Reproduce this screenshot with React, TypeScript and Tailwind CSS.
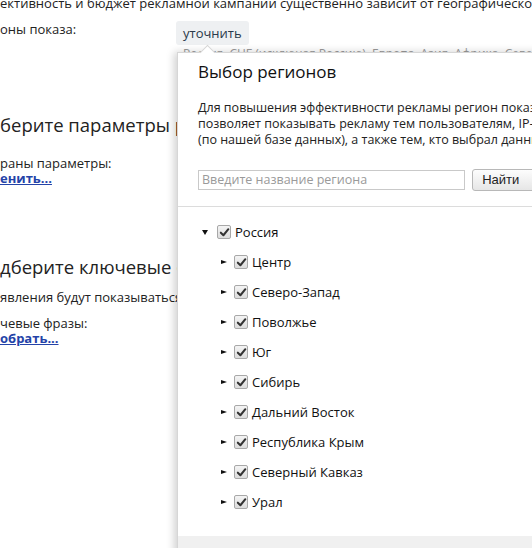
import React from "react";

const REGIONS = [
  "Центр",
  "Северо-Запад",
  "Поволжье",
  "Юг",
  "Сибирь",
  "Дальний Восток",
  "Республика Крым",
  "Северный Кавказ",
  "Урал",
];

function Check() {
  return (
    <span className="flex h-[14px] w-[14px] shrink-0 items-center justify-center rounded-[2px] border border-[#a8a8a8] bg-gradient-to-b from-[#f4f4f4] to-[#dcdcdc]">
      <svg viewBox="0 0 12 12" className="h-[11px] w-[11px]">
        <path d="M2 6.2 L4.8 9 L10.2 2.4" fill="none" stroke="#333" strokeWidth="2.2" strokeLinecap="round" strokeLinejoin="round" />
      </svg>
    </span>
  );
}

function Arrow({ open }: { open?: boolean }) {
  return open ? (
    <svg viewBox="0 0 6 5" className="h-[5px] w-[6px]">
      <path d="M0 0 H6 L3 5 Z" fill="#111" />
    </svg>
  ) : (
    <svg viewBox="0 0 6 4" className="h-[4px] w-[6px]">
      <path d="M0 0 L6 2 L0 4 Z" fill="#111" />
    </svg>
  );
}

export default function App() {
  return (
    <div className="relative h-[548px] w-[532px] overflow-hidden bg-white font-['Open_Sans',sans-serif] text-[#222]">
      {/* page behind the popup */}
      <div className="-mt-[6px]">
        <p className="whitespace-nowrap text-[13px] leading-[18px]">
          ективность и бюджет рекламной кампании существенно зависит от географического региона показа.
        </p>
        <div className="mt-[9px] flex items-start">
          <span className="w-[176px] text-[13px] leading-[16px]">оны показа:</span>
          <span className="rounded-[3px] bg-[#eef0f2] px-[7px] py-[3px] text-[13px] leading-[18px] text-[#2b3a4a]">
            уточнить
          </span>
        </div>
        <p className="mt-[1px] whitespace-nowrap pl-[183px] text-[12px] leading-[16px] text-[#999]">
          Россия, СНГ (исключая Россию), Европа, Азия, Африка, Северная Америка
        </p>

        <h2 className="mt-[50px] whitespace-nowrap text-[18.5px] leading-[26px]">берите параметры рекламы</h2>
        <p className="mt-[17px] text-[13px] leading-[16px]">раны параметры:</p>
        <a className="block text-[13px] font-bold leading-[15px] text-[#2443a8] underline">енить...</a>

        <h2 className="mt-[68px] whitespace-nowrap text-[18.5px] leading-[26px]">дберите ключевые фразы</h2>
        <p className="mt-[9px] whitespace-nowrap text-[13px] leading-[16px]">явления будут показываться по этим фразам</p>
        <p className="mt-[10px] text-[13px] leading-[16px]">чевые фразы:</p>
        <a className="block text-[13px] font-bold leading-[14px] text-[#2443a8] underline">обрать...</a>
      </div>

      {/* popup */}
      <div className="absolute bottom-[-10px] left-[177px] right-[-40px] top-[52px] flex flex-col border-l border-t border-[#d6d6d6] bg-white shadow-[-3px_0_8px_rgba(0,0,0,0.18)]">
        <span className="absolute -top-[6px] left-[24px] h-[11px] w-[11px] rotate-45 border-l border-t border-[#d6d6d6] bg-white" />
        <div className="px-[20px] pt-[7px]">
          <h1 className="text-[17px] leading-[24px] text-[#111]">Выбор регионов</h1>
          <p className="mt-[16px] whitespace-nowrap text-[12.5px] leading-[16px] text-[#222]">
            Для повышения эффективности рекламы регион показа уточнён. Это
            <br />
            позволяет показывать рекламу тем пользователям, IP-адрес которых
            <br />
            (по нашей базе данных), а также тем, кто выбрал данный регион
          </p>
          <div className="mt-[21px] flex items-center gap-[7px]">
            <div className="flex h-[20px] w-[268px] items-center border border-[#c9c9c9] px-[3px] text-[12.5px] text-[#9a9a9a]">
              Введите название региона
            </div>
            <button className="h-[22px] w-[80px] rounded-[3px] border border-[#b8b8b8] bg-gradient-to-b from-[#fdfdfd] to-[#e6e6e6] pl-[9px] text-left font-['Liberation_Sans',sans-serif] text-[13px] text-[#222]">
              Найти
            </button>
          </div>
        </div>
        <div className="mt-[15px] border-t border-[#dcdcdc]" />

        <div className="pl-[24px] pt-[10px]">
          <div className="flex h-[30px] items-center">
            <span className="flex w-[15px] items-center">
              <Arrow open />
            </span>
            <Check />
            <span className="ml-[4px] text-[13px] leading-[16px] text-[#111]">Россия</span>
          </div>
          {REGIONS.map((r) => (
            <div key={r} className="flex h-[30px] items-center pl-[19px]">
              <span className="flex w-[13px] items-center">
                <Arrow />
              </span>
              <Check />
              <span className="ml-[4px] text-[13px] leading-[16px] text-[#111]">{r}</span>
            </div>
          ))}
        </div>
        <div className="mt-[19px] flex-1 bg-[#f0f0f0]" />
      </div>
    </div>
  );
}
